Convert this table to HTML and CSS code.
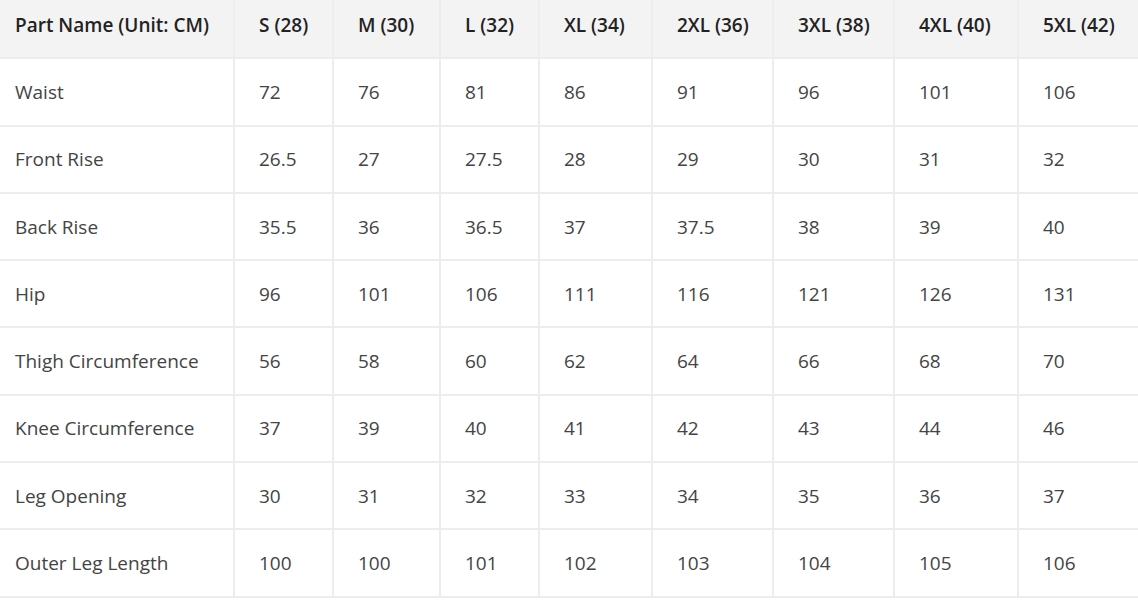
FILE: index.html
```html
<!DOCTYPE html>
<html>
<head>
<meta charset="utf-8">
<link rel="stylesheet" href="styles.css">
</head>
<body>
<table class="size-table">
  <colgroup>
    <col class="c-name"><col class="c1"><col class="c2"><col class="c3"><col class="c4"><col class="c5"><col class="c6"><col class="c7"><col class="c8">
  </colgroup>
  <thead>
    <tr><th>Part Name (Unit: CM)</th><th>S (28)</th><th>M (30)</th><th>L (32)</th><th>XL (34)</th><th>2XL (36)</th><th>3XL (38)</th><th>4XL (40)</th><th>5XL (42)</th></tr>
  </thead>
  <tbody>
    <tr><td>Waist</td><td>72</td><td>76</td><td>81</td><td>86</td><td>91</td><td>96</td><td>101</td><td>106</td></tr>
    <tr><td>Front Rise</td><td>26.5</td><td>27</td><td>27.5</td><td>28</td><td>29</td><td>30</td><td>31</td><td>32</td></tr>
    <tr><td>Back Rise</td><td>35.5</td><td>36</td><td>36.5</td><td>37</td><td>37.5</td><td>38</td><td>39</td><td>40</td></tr>
    <tr><td>Hip</td><td>96</td><td>101</td><td>106</td><td>111</td><td>116</td><td>121</td><td>126</td><td>131</td></tr>
    <tr><td>Thigh Circumference</td><td>56</td><td>58</td><td>60</td><td>62</td><td>64</td><td>66</td><td>68</td><td>70</td></tr>
    <tr><td>Knee Circumference</td><td>37</td><td>39</td><td>40</td><td>41</td><td>42</td><td>43</td><td>44</td><td>46</td></tr>
    <tr><td>Leg Opening</td><td>30</td><td>31</td><td>32</td><td>33</td><td>34</td><td>35</td><td>36</td><td>37</td></tr>
    <tr><td>Outer Leg Length</td><td>100</td><td>100</td><td>101</td><td>102</td><td>103</td><td>104</td><td>105</td><td>106</td></tr>
  </tbody>
</table>
</body>
</html>
```
FILE: styles.css
```css
html, body {
  margin: 0;
  padding: 0;
  background: #ffffff;
}
body {
  font-family: "Open Sans", "Noto Sans", sans-serif;
  overflow: hidden;
}
.size-table {
  width: 1138px;
  table-layout: fixed;
  border-collapse: collapse;
  margin-top: -8px;
  font-size: 19px;
  color: #444444;
}
.c-name { width: 234px; }
.c1 { width: 99px; }
.c2 { width: 107px; }
.c3 { width: 99px; }
.c4 { width: 113px; }
.c5 { width: 121px; }
.c6 { width: 121px; }
.c7 { width: 124px; }
.c8 { width: 120px; }
.size-table th,
.size-table td {
  text-align: left;
  padding: 0 0 0 24px;
  height: 65.3px;
  border: 2px solid #ededed;
  white-space: nowrap;
}
.size-table th:first-child,
.size-table td:first-child {
  padding-left: 15px;
  border-left: none;
}
.size-table th:last-child,
.size-table td:last-child {
  border-right: none;
}
.size-table th {
  background: #f3f3f3;
  color: #222222;
  font-weight: 600;
  border-top: none;
}
```
